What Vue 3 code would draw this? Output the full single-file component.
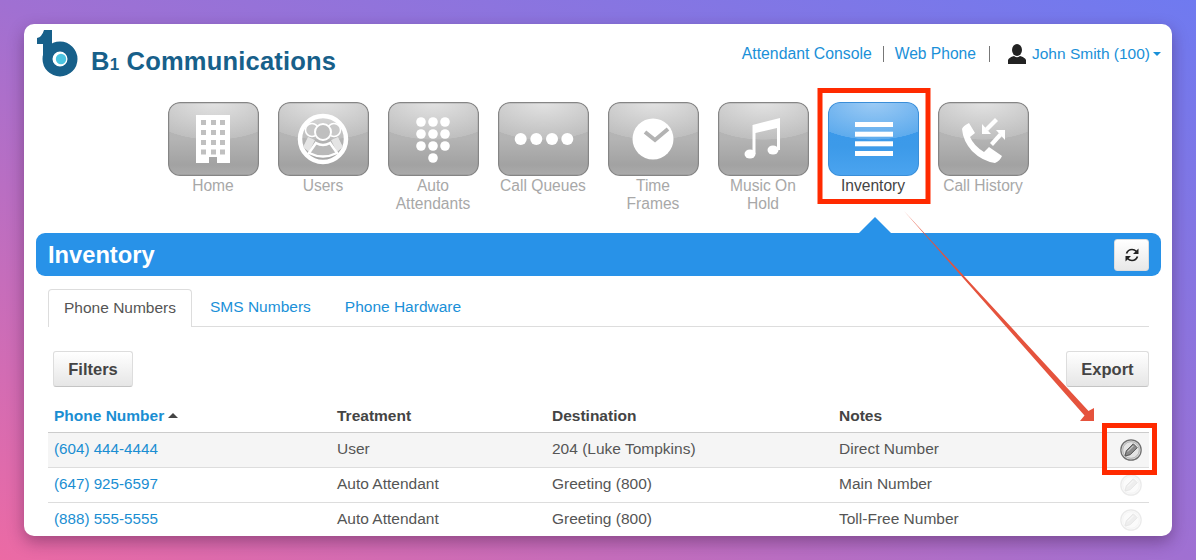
<template>
  <div class="page">
    <div class="card">
      <header class="top">
        <div class="brand">
          <svg class="logo" width="42" height="48" viewBox="0 0 42 48">
            <circle cx="23" cy="29" r="12.500" fill="#fff" stroke="#17608a" stroke-width="10" />
            <path d="M0 8 Q5 7 7 0 H15 V29 H6 V14 H0 Z" fill="#17608a" />
            <circle cx="24" cy="29" r="5.200" fill="#4cc4e0" />
          </svg>
          <span class="brand-name">B<small>1</small> Communications</span>
        </div>
        <div class="top-links">
          <a class="console">Attendant Console</a>
          <i class="sep first"></i>
          <a>Web Phone</a>
          <i class="sep second"></i>
          <svg class="person" width="18" height="20" viewBox="0 0 18 20">
            <ellipse cx="9" cy="6" rx="5" ry="6" fill="#222" />
            <path d="M0 20 V16 Q1 13.500 6 12 Q9 14.500 12 12 Q17 13.500 18 16 V20 Z" fill="#222" />
          </svg>
          <a class="user">John Smith (100)</a>
          <i class="caret"></i>
        </div>
      </header>

      <nav class="nav">
        <div v-for="item in navItems" :key="item.id" class="nav-item" :class="{ active: item.id === 'inventory' }">
          <div class="tile">
            <svg width="91" height="74" viewBox="0 0 91 74">
              <g v-if="item.id === 'home'">
                <path d="M28 13 H62 V61 H49 V55 H41 V61 H28 Z" fill="#fff" />
                <g fill="#c0c0c0">
                  <template v-for="y in [18, 28, 38, 47.5]" :key="y">
                    <rect v-for="x in [33, 43, 52]" :key="x" :x="x" :y="y" width="5" height="5" />
                  </template>
                </g>
              </g>
              <g v-else-if="item.id === 'users'">
                <circle cx="45" cy="37" r="23" fill="none" stroke="#fff" stroke-width="4.500" />
                <circle cx="34" cy="28" r="6.500" fill="#c8c8c8" stroke="#fff" stroke-width="1.500" />
                <circle cx="56" cy="28" r="6.500" fill="#c8c8c8" stroke="#fff" stroke-width="1.500" />
                <path d="M25 45 L30 35 L37 38 L31 50 Z M65 45 L60 35 L53 38 L59 50 Z" fill="#e4e4e4" />
                <circle cx="45" cy="30" r="8" fill="#bfbfbf" stroke="#fff" stroke-width="2" />
                <path d="M31 51 L38 41 Q45 45 52 41 L59 51 Q45 58 31 51 Z" fill="#b9b9b9" stroke="#fff" stroke-width="2.500" />
              </g>
              <g v-else-if="item.id === 'auto'" fill="#fff">
                <template v-for="y in [20, 32, 44]" :key="y">
                  <circle v-for="x in [33, 45, 57]" :key="x" :cx="x" :cy="y" r="4.800" />
                </template>
                <circle cx="45" cy="56" r="4.800" />
              </g>
              <g v-else-if="item.id === 'queues'" fill="#fff">
                <circle v-for="x in [22.700, 38.300, 54, 69.300]" :key="x" :cx="x" cy="37" r="6" />
              </g>
              <g v-else-if="item.id === 'time'">
                <circle cx="45" cy="37" r="20.500" fill="#fff" />
                <path d="M37 30 L47 38 L60 27" fill="none" stroke="#b3b3b3" stroke-width="4" />
              </g>
              <g v-else-if="item.id === 'music'" fill="#fff">
                <ellipse cx="32" cy="52" rx="5.500" ry="4.500" />
                <ellipse cx="55" cy="48" rx="5.500" ry="4.500" />
                <path d="M34.500 52 V23 L62 16 V48 H59 V26 L37.500 31 V52 Z" />
              </g>
              <g v-else-if="item.id === 'inventory'" fill="#fff">
                <rect v-for="y in [20, 29.700, 39.300, 49]" :key="y" x="27" :y="y" width="38" height="5" />
              </g>
              <g v-else fill="#fff">
                <path d="M24 27 Q25 24 31 21 L37 31 L32 35 Q36 44 46 50 L51 45 L64 54 Q62 59 57 61 Q44 59 34 49 Q25 39 24 27 Z" />
                <path d="M57 16 L60 19 L50 29 L47 26 Z" />
                <path d="M44 22 L44 32 L53 32 Z" />
                <path d="M52 41 L55 44 L64 34 L61 31 Z" />
                <path d="M58 28 L67 28 L67 38 Z" />
              </g>
            </svg>
          </div>
          <div class="nav-label">
            <div v-for="line in item.label" :key="line">{{ line }}</div>
          </div>
        </div>
      </nav>

      <section class="bar">
        <i class="bar-tip"></i>
        <h1>Inventory</h1>
        <button class="refresh">
          <svg width="16" height="16" viewBox="0 0 16 16">
            <path d="M2.500 6.500 Q4 2.500 8 2.500 Q10.500 2.500 12.500 4.500" fill="none" stroke="#222" stroke-width="1.700" />
            <path d="M14.500 1.500 V7 H9 Z" fill="#222" />
            <path d="M13.500 9.500 Q12 13.500 8 13.500 Q5.500 13.500 3.500 11.500" fill="none" stroke="#222" stroke-width="1.700" />
            <path d="M1.500 14.500 V9 H7 Z" fill="#222" />
          </svg>
        </button>
      </section>

      <div class="content">
        <ul class="tabs">
          <li class="on">Phone Numbers</li>
          <li>SMS Numbers</li>
          <li>Phone Hardware</li>
        </ul>

        <div class="tools">
          <button class="btn">Filters</button>
          <button class="btn export">Export</button>
        </div>

        <table>
          <colgroup>
            <col style="width: 283px" />
            <col style="width: 215px" />
            <col style="width: 287px" />
            <col />
            <col style="width: 50px" />
          </colgroup>
          <thead>
            <tr>
              <th class="sorted">Phone Number<i class="sort"></i></th>
              <th>Treatment</th>
              <th>Destination</th>
              <th>Notes</th>
              <th></th>
            </tr>
          </thead>
          <tbody>
            <tr v-for="(row, i) in rows" :key="row.phone" :class="{ hover: i === 0 }">
              <td><a>{{ row.phone }}</a></td>
              <td>{{ row.treatment }}</td>
              <td>{{ row.destination }}</td>
              <td>{{ row.notes }}</td>
              <td class="edit">
                <svg :class="{ faded: i !== 0 }" width="22" height="22" viewBox="0 0 22 22">
                  <circle cx="11" cy="11" r="10.200" fill="#d8d8d8" stroke="#6e6e6e" stroke-width="1.200" />
                  <circle cx="11" cy="11" r="8.300" fill="#e4e4e4" stroke="#a8a8a8" stroke-width=".8" />
                  <path d="M5 17 L6.300 11.800 L13.300 4.800 L17.200 8.700 L10.200 15.700 Z" fill="#8a8a8a" stroke="#555" stroke-width="1" />
                  <path d="M7.800 12.500 L13.500 6.800" stroke="#ddd" stroke-width="1" />
                </svg>
              </td>
            </tr>
          </tbody>
        </table>
      </div>
    </div>

    <svg class="marks" width="1196" height="560" viewBox="0 0 1196 560">
      <rect x="820" y="90.500" width="108" height="111" fill="none" stroke="#ff2a00" stroke-width="5" />
      <rect x="1104.500" y="425.500" width="50" height="47" fill="none" stroke="#ff2a00" stroke-width="5" />
      <path d="M904 211 L1088.500 411 L1094 408 L1094 421 L1080 421 L1084.500 415.500 Z" fill="#e5533d" />
    </svg>
  </div>
</template>

<script setup>
const navItems = [
  { id: 'home', label: ['Home'] },
  { id: 'users', label: ['Users'] },
  { id: 'auto', label: ['Auto', 'Attendants'] },
  { id: 'queues', label: ['Call Queues'] },
  { id: 'time', label: ['Time', 'Frames'] },
  { id: 'music', label: ['Music On', 'Hold'] },
  { id: 'inventory', label: ['Inventory'] },
  { id: 'history', label: ['Call History'] },
]

const rows = [
  { phone: '(604) 444-4444', treatment: 'User', destination: '204 (Luke Tompkins)', notes: 'Direct Number' },
  { phone: '(647) 925-6597', treatment: 'Auto Attendant', destination: 'Greeting (800)', notes: 'Main Number' },
  { phone: '(888) 555-5555', treatment: 'Auto Attendant', destination: 'Greeting (800)', notes: 'Toll-Free Number' },
]
</script>

<style>
html,
body {
  margin: 0;
  overflow: hidden;
}
</style>

<style scoped>
.page {
  position: relative;
  box-sizing: border-box;
  width: 1196px;
  height: 560px;
  padding: 24px;
  background: linear-gradient(to top right, #ec6aa4, #a070d2 50%, #6f7af0);
  font-family: "Liberation Sans", Arial, sans-serif;
  color: #444;
}

.card {
  height: 512px;
  background: #fff;
  border-radius: 10px;
  overflow: hidden;
  box-shadow: 0 6px 16px rgba(60, 20, 60, 0.4);
}

.top {
  display: flex;
  justify-content: space-between;
  height: 78px;
  padding: 6px 11px 0 13px;
  box-sizing: border-box;
}

.brand {
  display: flex;
  align-items: flex-start;
}

.logo {
  display: block;
}

.brand-name {
  margin: 16px 0 0 12px;
  font-size: 25.500px;
  font-weight: 700;
  line-height: 30px;
  color: #17608a;
  letter-spacing: 0.2px;
  white-space: nowrap;
}

.brand-name small {
  font-size: 17px;
}

.top-links {
  display: flex;
  align-items: center;
  height: 32px;
  margin-top: 8px;
  font-size: 15.600px;
  color: #1a90d8;
}

.console {
  font-size: 15.800px;
}

.user {
  font-size: 15.500px;
}

.sep {
  width: 1px;
  height: 16px;
  background: #777;
}

.sep.first {
  margin: 0 11px;
}

.sep.second {
  margin: 0 18px 0 13px;
}

.person {
  margin-right: 6px;
}

.caret {
  width: 0;
  height: 0;
  margin-left: 3px;
  border: 4.500px solid transparent;
  border-top-color: #1a90d8;
  border-bottom: 0;
}

.nav {
  display: flex;
  height: 131px;
  padding-left: 134px;
}

.nav-item {
  width: 110px;
  text-align: center;
}

.tile {
  width: 91px;
  height: 74px;
  margin: 0 auto;
  border-radius: 12px;
  background:
    radial-gradient(ellipse 80% 51% at 50% 0, rgba(255, 255, 255, 0.6), rgba(255, 255, 255, 0.14) 99%, transparent 100%),
    linear-gradient(#b8b8b8, #b4b4b4 50%, #a2a2a2 85%, #acacac);
  box-shadow: inset 0 0 0 1.200px #858585;
}

.tile svg {
  display: block;
}

.active .tile {
  background:
    radial-gradient(ellipse 80% 51% at 50% 0, rgba(255, 255, 255, 0.5), rgba(255, 255, 255, 0.18) 99%, transparent 100%),
    linear-gradient(#3a97ea, #3c9ae9 60%, #4ba4ef);
  box-shadow: inset 0 0 0 1px #3a8ed8;
}

.nav-label {
  margin-top: 1px;
  font-size: 15.600px;
  line-height: 18px;
  color: #a8a8a8;
}

.active .nav-label {
  color: #444;
}

.bar {
  position: relative;
  display: flex;
  align-items: center;
  justify-content: space-between;
  height: 43px;
  margin: 0 11px 0 12px;
  padding: 0 12px;
  background: #2892e8;
  border-radius: 9px;
}

.bar-tip {
  position: absolute;
  left: 823px;
  top: -16px;
  width: 0;
  height: 0;
  border-left: 16px solid transparent;
  border-right: 16px solid transparent;
  border-bottom: 16px solid #2892e8;
}

.bar h1 {
  margin: 2px 0 0;
  font-size: 23.700px;
  font-weight: 700;
  color: #fff;
}

.refresh {
  display: flex;
  align-items: center;
  justify-content: center;
  width: 35px;
  height: 32px;
  padding: 0;
  background: linear-gradient(#fff, #e8e8e8);
  border: 1px solid #ddd;
  border-radius: 3px;
}

.content {
  padding: 13px 23px 0 24px;
}

.tabs {
  display: flex;
  gap: 2px;
  height: 38px;
  margin: 0;
  padding: 0;
  box-sizing: border-box;
  list-style: none;
  border-bottom: 1px solid #ddd;
  font-size: 15.500px;
}

.tabs li {
  padding: 9px 16px 0;
  color: #1a90d8;
}

.tabs li.on {
  height: 38px;
  box-sizing: border-box;
  padding: 9px 15px 0;
  color: #555;
  background: #fff;
  border: 1px solid #ddd;
  border-bottom: 0;
  border-radius: 4px 4px 0 0;
}

.tools {
  display: flex;
  justify-content: space-between;
  padding: 24px 0 0 5px;
}

.btn {
  width: 80px;
  height: 36px;
  padding: 0;
  font-family: inherit;
  font-size: 16.500px;
  font-weight: 700;
  color: #444;
  background: linear-gradient(#fff, #e6e6e6);
  border: 1px solid #ddd;
  border-bottom-color: #c4c4c4;
  border-radius: 3px;
}

.btn.export {
  width: 83px;
}

table {
  width: 100%;
  margin-top: 11px;
  table-layout: fixed;
  border-collapse: collapse;
  font-size: 15.500px;
}

th {
  height: 34px;
  padding: 2px 6px 0;
  box-sizing: border-box;
  text-align: left;
  font-size: 15.500px;
  font-weight: 700;
  color: #444;
  border-bottom: 1px solid #ccc;
}

th.sorted {
  color: #1a8ed2;
}

.sort {
  display: inline-block;
  margin-left: 4px;
  vertical-align: 3px;
  border: 5.500px solid transparent;
  border-bottom-color: #444;
  border-top: 0;
}

td {
  height: 35px;
  padding: 0 6px 2px;
  box-sizing: border-box;
  color: #555;
  border-bottom: 1px solid #ddd;
}

td a {
  font-size: 15.200px;
  color: #1a8ed2;
}

tr.hover td {
  background: #f5f5f5;
}

.edit {
  padding: 1px 7px 0 0;
  text-align: right;
}

.edit svg {
  display: inline-block;
  vertical-align: middle;
}

.edit svg.faded {
  opacity: 0.14;
}

.marks {
  position: absolute;
  left: 0;
  top: 0;
  pointer-events: none;
}
</style>
